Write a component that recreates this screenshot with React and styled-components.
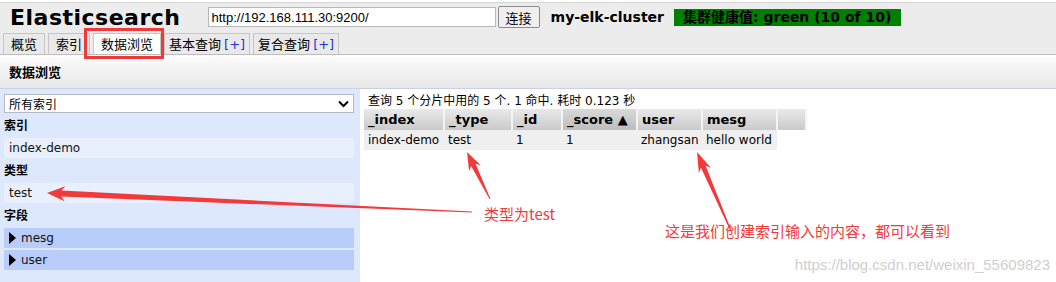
import React from 'react';
import styled, { createGlobalStyle } from 'styled-components';

const GlobalStyle = createGlobalStyle`
  html, body {
    margin: 0;
    padding: 0;
    background: #fff;
  }
  body {
    font-family: 'DejaVu Sans', Verdana, 'Noto Sans CJK SC', sans-serif;
    font-size: 12px;
    color: #000;
  }
`;

const cjk = `'DejaVu Sans', 'Noto Sans CJK SC', sans-serif`;

const Page = styled.div`
  position: relative;
  width: 1056px;
  height: 282px;
  overflow: hidden;
`;

const Header = styled.header`
  margin-top: 2px;
  border-top: 1px solid #d6d6d6;
  border-bottom: 1px solid #bdbdbd;
  background: #ececec;
`;

const TopRow = styled.div`
  display: flex;
  align-items: center;
  height: 28px;
  padding-left: 10px;
`;

const Brand = styled.h1`
  margin: 0 27px 0 0;
  font-family: 'DejaVu Sans', Verdana, sans-serif;
  font-size: 22px;
  font-weight: bold;
  letter-spacing: 0.5px;
`;

const UrlInput = styled.input`
  box-sizing: border-box;
  width: 288px;
  height: 20px;
  padding: 0 3px;
  border: 1px solid #b8b8b8;
  font-family: 'Liberation Sans', Arial, sans-serif;
  font-size: 13px;
  background: #fff;
`;

const ConnectButton = styled.button`
  box-sizing: border-box;
  height: 22px;
  margin-left: 2px;
  padding: 0 7px;
  border: 1px solid #8c8c8c;
  border-radius: 2px;
  background: #efefef;
  font-family: ${cjk};
  font-size: 13px;
`;

const ClusterName = styled.span`
  margin-left: 11px;
  font-family: 'DejaVu Sans', Verdana, sans-serif;
  font-size: 14px;
  font-weight: bold;
`;

const Health = styled.span`
  margin-left: 10px;
  padding: 0 10px 0 9px;
  height: 17px;
  line-height: 17px;
  background: #008000;
  font-family: ${cjk};
  font-size: 14px;
  font-weight: bold;
  color: #000;
`;

const Tabs = styled.nav`
  display: flex;
  align-items: flex-end;
  gap: 3px;
  padding: 2px 0 0 3px;
`;

const Tab = styled.div`
  box-sizing: border-box;
  height: 21px;
  padding: 0 ${p => (p.$wide ? 4 : 7)}px;
  border: 1px solid #c6c6c6;
  border-bottom: none;
  background: ${p => (p.$active ? '#fff' : '#e9e9e9')};
  font-family: ${cjk};
  font-size: 13px;
  line-height: 21px;
  white-space: nowrap;
`;

const Plus = styled.span`
  color: #2233dd;
  margin-left: 3px;
`;

const SectionBar = styled.div`
  height: 33px;
  padding-left: 9px;
  display: flex;
  align-items: center;
  background: linear-gradient(#fdfdfd, #e7e7e7);
  border-bottom: 1px solid #c8d2e4;
  font-family: ${cjk};
  font-size: 13px;
  font-weight: bold;
`;

const Body = styled.div`
  display: grid;
  grid-template-columns: 360px 1fr;
  height: 200px;
`;

const Sidebar = styled.aside`
  background: #dee8fd;
  padding: 5px 6px 0 4px;
`;

const Select = styled.div`
  box-sizing: border-box;
  display: flex;
  align-items: center;
  justify-content: space-between;
  height: 19px;
  padding: 0 4px;
  border: 1px solid #b3b9c5;
  background: #fff;
  font-family: ${cjk};
  font-size: 12px;
`;

const Label = styled.div`
  margin: 5px 0 4px 0;
  height: 16px;
  line-height: 16px;
  font-family: ${cjk};
  font-size: 12px;
  font-weight: bold;
`;

const Item = styled.div`
  box-sizing: border-box;
  height: 20px;
  padding-left: 5px;
  line-height: 20px;
  border-radius: 4px;
  background: #e8f0fe;
  font-size: 12px;
  color: #111;
`;

const Field = styled.div`
  display: flex;
  align-items: center;
  gap: 5px;
  height: 20px;
  margin-bottom: 2px;
  padding-left: 5px;
  background: #b9cdfb;
  font-size: 12px;
  color: #111;
`;

const Tri = styled.span`
  width: 0;
  height: 0;
  border-top: 6px solid transparent;
  border-bottom: 6px solid transparent;
  border-left: 7px solid #000;
`;

const Main = styled.main`
  padding: 4px 0 0 4px;
`;

const Summary = styled.div`
  height: 16px;
  padding-left: 4px;
  font-family: ${cjk};
  font-size: 12px;
  line-height: 16px;
`;

const Table = styled.table`
  border-collapse: collapse;
  margin-top: 0;
  font-size: 12px;
`;

const Th = styled.th`
  box-sizing: border-box;
  width: ${p => p.$w}px;
  height: 21px;
  padding: 0 0 0 4px;
  text-align: left;
  font-size: 13px;
  font-weight: bold;
  border-right: 2px solid #f3f3f3;
  background: ${p =>
    p.$sorted
      ? 'linear-gradient(#d9d9d9, #bdbdbd)'
      : 'linear-gradient(#e9e9e9, #cacaca)'};
`;

const Td = styled.td`
  height: 20px;
  padding: 0 0 0 4px;
  background: ${p => (p.$empty ? '#fff' : '#efefef')};
  white-space: nowrap;
`;

const Arrow = styled.svg`
  position: absolute;
  left: 0;
  top: 0;
  pointer-events: none;
`;

const Note = styled.span`
  position: absolute;
  left: ${p => p.$x}px;
  top: ${p => p.$y}px;
  font-family: 'Noto Sans CJK SC', sans-serif;
  font-size: 15px;
  color: #f23a3a;
  white-space: nowrap;
`;

const Watermark = styled.span`
  position: absolute;
  right: 6px;
  bottom: 9px;
  font-family: 'Liberation Sans', Arial, sans-serif;
  font-size: 15px;
  color: #cfcfcf;
`;

function arrowPoints(tail, tip, headLen, headW, tailW, neckW) {
  const dx = tip[0] - tail[0];
  const dy = tip[1] - tail[1];
  const len = Math.hypot(dx, dy);
  const ux = dx / len;
  const uy = dy / len;
  const nx = -uy;
  const ny = ux;
  const base = [tip[0] - ux * headLen, tip[1] - uy * headLen];
  const neck = [tip[0] - ux * headLen * 0.8, tip[1] - uy * headLen * 0.8];
  const pt = (p, s) => `${(p[0] + nx * s).toFixed(1)},${(p[1] + ny * s).toFixed(1)}`;
  return [
    pt(tail, tailW / 2),
    pt(neck, neckW / 2),
    pt(base, headW / 2),
    `${tip[0]},${tip[1]}`,
    pt(base, -headW / 2),
    pt(neck, -neckW / 2),
    pt(tail, -tailW / 2),
  ].join(' ');
}

const columns = [
  { key: '_index', w: 80 },
  { key: '_type', w: 68 },
  { key: '_id', w: 50 },
  { key: '_score ▲', w: 75, sorted: true },
  { key: 'user', w: 65 },
  { key: 'mesg', w: 75 },
  { key: '', w: 29 },
];

const row = ['index-demo', 'test', '1', '1', 'zhangsan', 'hello world'];

export default function App() {
  return (
    <Page>
      <GlobalStyle />
      <Header>
        <TopRow>
          <Brand>Elasticsearch</Brand>
          <UrlInput defaultValue="http://192.168.111.30:9200/" />
          <ConnectButton>连接</ConnectButton>
          <ClusterName>my-elk-cluster</ClusterName>
          <Health>集群健康值: green (10 of 10)</Health>
        </TopRow>
        <Tabs>
          <Tab>概览</Tab>
          <Tab>索引</Tab>
          <Tab $active>数据浏览</Tab>
          <Tab $wide>
            基本查询<Plus>[+]</Plus>
          </Tab>
          <Tab $wide>
            复合查询<Plus>[+]</Plus>
          </Tab>
        </Tabs>
      </Header>
      <SectionBar>数据浏览</SectionBar>
      <Body>
        <Sidebar>
          <Select>
            <span>所有索引</span>
            <svg width="11" height="8" viewBox="0 0 11 8">
              <path d="M1 1.5 L5.5 6 L10 1.5" fill="none" stroke="#000" strokeWidth="2" />
            </svg>
          </Select>
          <Label>索引</Label>
          <Item>index-demo</Item>
          <Label>类型</Label>
          <Item>test</Item>
          <Label>字段</Label>
          <Field>
            <Tri />
            mesg
          </Field>
          <Field>
            <Tri />
            user
          </Field>
        </Sidebar>
        <Main>
          <Summary>查询 5 个分片中用的 5 个. 1 命中. 耗时 0.123 秒</Summary>
          <Table>
            <thead>
              <tr>
                {columns.map(c => (
                  <Th key={c.key || 'filler'} $w={c.w} $sorted={c.sorted}>
                    {c.key}
                  </Th>
                ))}
              </tr>
            </thead>
            <tbody>
              <tr>
                {row.map((v, i) => (
                  <Td key={i}>{v}</Td>
                ))}
                <Td $empty />
              </tr>
            </tbody>
          </Table>
        </Main>
      </Body>

      <Arrow width="1056" height="282">
        <rect x="85.5" y="29.5" width="77" height="28" fill="none" stroke="#f03a3a" strokeWidth="3" />
        <polygon points={arrowPoints([472, 212], [47, 193], 18, 15, 1, 6)} fill="#f23a3a" />
        <polygon points={arrowPoints([490, 199], [467, 152], 18, 13, 1, 5)} fill="#f23a3a" />
        <polygon points={arrowPoints([731, 231], [697, 152], 20, 13, 1, 5)} fill="#f23a3a" />
      </Arrow>
      <Note $x={484} $y={203}>类型为test</Note>
      <Note $x={665} $y={220}>这是我们创建索引输入的内容，都可以看到</Note>
      <Watermark>https://blog.csdn.net/weixin_55609823</Watermark>
    </Page>
  );
}
